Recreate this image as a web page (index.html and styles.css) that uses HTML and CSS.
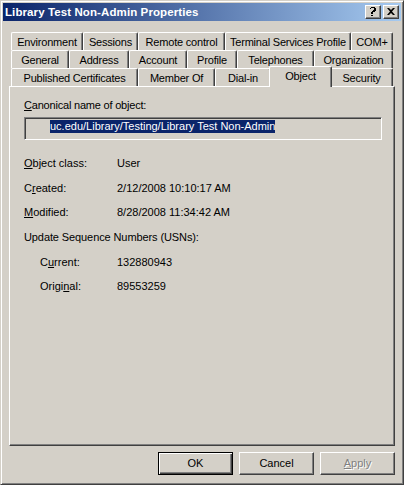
FILE: index.html
```html
<!DOCTYPE html>
<html lang="en">
<head>
  <meta charset="UTF-8">
  <title>Library Test Non-Admin Properties</title>
  <link rel="stylesheet" href="styles.css">
</head>
<body>

  <div class="window">
    <div class="titlebar">
      <span class="title">Library Test Non-Admin Properties</span>
      <div class="caption-buttons">
        <div class="cap-btn">
          <svg width="8" height="9" viewBox="0 0 8 9">
            <path d="M1 1h1v-1h4v1h1v3h-1v1h-2v2h-2v-2h1v-1h1v-1h1v-2h-3v1h-1z" fill="#000"/>
            <rect x="2" y="8" width="2" height="1" fill="#000"/>
          </svg>
        </div>
        <div class="cap-btn">
          <svg width="8" height="7" viewBox="0 0 8 7">
            <path d="M0 0h2l2 2 2-2h2l-3 3.5 3 3.5h-2l-2-2-2 2h-2l3-3.5z" fill="#000"/>
          </svg>
        </div>
      </div>
    </div>

    <div class="body">
      <div class="tabs">
        <div class="tab-row row-1">
          <div class="tab">Environment</div>
          <div class="tab">Sessions</div>
          <div class="tab">Remote control</div>
          <div class="tab">Terminal Services Profile</div>
          <div class="tab">COM+</div>
        </div>
        <div class="tab-row row-2">
          <div class="tab">General</div>
          <div class="tab">Address</div>
          <div class="tab">Account</div>
          <div class="tab">Profile</div>
          <div class="tab">Telephones</div>
          <div class="tab">Organization</div>
        </div>
        <div class="tab-row row-3">
          <div class="tab">Published Certificates</div>
          <div class="tab">Member Of</div>
          <div class="tab">Dial-in</div>
          <div class="tab selected">Object</div>
          <div class="tab">Security</div>
        </div>
      </div>

      <div class="panel">
        <div class="label"><u>C</u>anonical name of object:</div>
        <div class="textbox"><span class="selection">uc.edu/Library/Testing/Library Test Non-Admin</span></div>

        <div class="props">
          <div class="prop">
            <span class="prop-name"><u>O</u>bject class:</span>
            <span class="prop-value">User</span>
          </div>
          <div class="prop">
            <span class="prop-name">C<u>r</u>eated:</span>
            <span class="prop-value">2/12/2008 10:10:17 AM</span>
          </div>
          <div class="prop">
            <span class="prop-name"><u>M</u>odified:</span>
            <span class="prop-value">8/28/2008 11:34:42 AM</span>
          </div>
          <div class="prop">
            <span class="prop-name wide">Update Sequence Numbers (USNs):</span>
          </div>
          <div class="prop">
            <span class="prop-name indent">C<u>u</u>rrent:</span>
            <span class="prop-value">132880943</span>
          </div>
          <div class="prop">
            <span class="prop-name indent">Origi<u>n</u>al:</span>
            <span class="prop-value">89553259</span>
          </div>
        </div>
      </div>

      <div class="buttons">
        <div class="btn default"><span>OK</span></div>
        <div class="btn"><span>Cancel</span></div>
        <div class="btn disabled"><span><u>A</u>pply</span></div>
      </div>
    </div>
  </div>

</body>
</html>
```

FILE: styles.css
```css
html, body {
  margin: 0;
  padding: 0;
  background-color: #d4d0c8;
}

body {
  font-family: 'Liberation Sans', Arial, sans-serif;
  font-size: 11px;
  color: #000;
}

.window {
  width: 404px;
  height: 485px;
  box-sizing: border-box;
  background-color: #d4d0c8;
  border: 1px solid;
  border-color: #d4d0c8 #404040 #404040 #d4d0c8;
  box-shadow: inset 1px 1px #fff, inset -1px -1px #808080;
  padding: 2px;
  display: flex;
  flex-direction: column;
}

/* title bar */

.titlebar {
  height: 18px;
  flex: none;
  display: flex;
  align-items: center;
  justify-content: space-between;
  padding: 0 2px 0 2px;
  background: linear-gradient(to right, #0a246a, #a6caf0);
}

.title {
  color: #fff;
  font-weight: bold;
  font-size: 11.5px;
  letter-spacing: 0.1px;
}

.caption-buttons {
  display: flex;
  gap: 2px;
}

.cap-btn {
  width: 16px;
  height: 14px;
  box-sizing: border-box;
  background-color: #d4d0c8;
  border: 1px solid;
  border-color: #fff #404040 #404040 #fff;
  box-shadow: inset -1px -1px #808080;
  display: flex;
  align-items: center;
  justify-content: center;
  padding: 0 1px 1px 0;
}

/* dialog body */

.body {
  flex: 1;
  display: flex;
  flex-direction: column;
  padding: 11px 6px 0 6px;
}

.tabs {
  margin: 0 2px;
}

.tab-row {
  display: grid;
  height: 18px;
}

.row-1 { grid-template-columns: 72px 55px 87px 126px 42px; }
.row-2 { grid-template-columns: 58px 60px 58px 50px 77px 79px; }
.row-3 { grid-template-columns: 127px 77px 56px 59px 63px; }

.tab {
  box-sizing: border-box;
  border-top: 1px solid #fff;
  border-left: 1px solid #fff;
  border-right: 1px solid #404040;
  border-radius: 2px 2px 0 0;
  box-shadow: inset -1px 0 #808080;
  background-color: #d4d0c8;
  text-align: center;
  line-height: 17px;
  padding-top: 1px;
  white-space: nowrap;
  letter-spacing: -0.2px;
  overflow: hidden;
}

.tab.selected {
  position: relative;
  z-index: 1;
  margin: -2px -2px -1px -2px;
  padding-top: 0;
  line-height: 18px;
}

.panel {
  height: 360px;
  box-sizing: border-box;
  border: 1px solid;
  border-color: #fff #404040 #404040 #fff;
  box-shadow: inset -1px -1px #808080;
  padding: 12px 12px 0 14px;
}

.label {
  line-height: 13px;
  letter-spacing: -0.2px;
}

.textbox {
  margin-top: 5px;
  height: 23px;
  width: 358px;
  box-sizing: border-box;
  border: 1px solid;
  border-color: #808080 #fff #fff #808080;
  box-shadow: inset 1px 1px #404040, inset -1px -1px #d4d0c8;
  padding: 2px 0 0 25px;
}

.selection {
  display: inline-block;
  background-color: #0a246a;
  color: #fff;
  height: 13px;
  line-height: 13px;
}

.props {
  margin-top: 11px;
}

.prop {
  display: flex;
  height: 24.6px;
  align-items: center;
}

.prop-name {
  width: 93px;
  flex: none;
}

.prop-name.indent {
  padding-left: 16px;
  width: 77px;
}

.prop-name.wide {
  width: auto;
  letter-spacing: -0.1px;
}

/* push buttons */

.buttons {
  display: flex;
  justify-content: flex-end;
  gap: 6px;
  margin-top: 6px;
}

.btn {
  width: 75px;
  height: 23px;
  box-sizing: border-box;
  border: 1px solid;
  border-color: #fff #404040 #404040 #fff;
  box-shadow: inset -1px -1px #808080;
  display: flex;
  align-items: center;
  justify-content: center;
  padding-bottom: 1px;
}

.btn.default {
  border: 1px solid #000;
  box-shadow: inset 1px 1px #fff, inset -1px -1px #404040, inset -2px -2px #808080;
}

.btn.disabled {
  color: #808080;
  text-shadow: 1px 1px #fff;
}
```
